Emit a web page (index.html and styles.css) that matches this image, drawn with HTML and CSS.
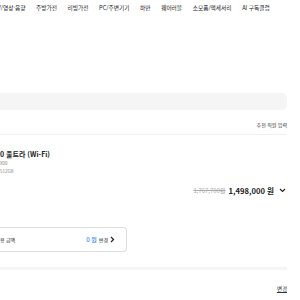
FILE: index.html
```html
<!DOCTYPE html>
<html lang="ko">
<head>
    <meta charset="UTF-8">
    <meta name="viewport" content="width=device-width, initial-scale=1.0">
    <title>주문서</title>
    <link rel="stylesheet" href="styles.css">
</head>
<body>
    <div class="page">
        <nav class="gnb">
            <a>TV/영상·음향</a>
            <a>주방가전</a>
            <a>리빙가전</a>
            <a>PC/주변기기</a>
            <a>하만</a>
            <a>웨어러블</a>
            <a>소모품/액세서리</a>
            <a>AI 구독클럽</a>
        </nav>

        <div class="search-bar"></div>

        <div class="section-head">
            <a class="link-small">추천 직원 입력</a>
        </div>

        <div class="product">
            <div class="product-info">
                <p class="product-name">0 울트라 (Wi-Fi)</p>
                <p class="product-meta">X00</p>
                <p class="product-meta">512GB</p>
            </div>
            <div class="price-row">
                <span class="price-old">1,767,700원</span>
                <span class="price-now">1,498,000 원</span>
                <svg class="chev" width="7" height="5" viewBox="0 0 7 5"><path d="M1 1l2.5 2.5L6 1" fill="none" stroke="#222" stroke-width="1.1"/></svg>
            </div>
        </div>

        <div class="point-box">
            <span class="point-label">용 금액</span>
            <span class="point-value"><b>0 원</b> 변경
                <svg width="5" height="7" viewBox="0 0 5 7"><path d="M1 1l2.5 2.5L1 6" fill="none" stroke="#222" stroke-width="1.2"/></svg>
            </span>
        </div>

        <div class="divider"></div>

        <div class="section-foot">
            <a class="link-under">변경</a>
        </div>
    </div>
</body>
</html>
```

FILE: styles.css
```css
body {
    margin: 0;
    font-family: 'Noto Sans CJK KR', 'Noto Sans', sans-serif;
    color: #222;
    background: #fff;
    overflow: hidden;
}
.page {
    width: 287px;
}
p {
    margin: 0;
}
.gnb {
    display: flex;
    gap: 10.6px;
    margin-left: -6px;
    padding-top: 4px;
    height: 11px;
    font-size: 5.7px;
    line-height: 8px;
    white-space: nowrap;
}
.gnb a {
    color: #222;
}
.search-bar {
    margin-top: 78px;
    height: 17px;
    background: #f5f5f5;
    border-radius: 0 5px 5px 0;
}
.section-head {
    display: flex;
    justify-content: flex-end;
    padding: 11px 0 5px;
    border-bottom: 1px solid #f0f0f0;
}
.link-small {
    font-size: 5px;
    line-height: 8px;
    color: #333;
}
.product {
    padding-top: 15px;
}
.product-name {
    font-size: 7px;
    font-weight: 700;
    line-height: 9px;
}
.product-meta {
    font-size: 4.5px;
    line-height: 8px;
    color: #888;
}
.price-row {
    display: flex;
    justify-content: flex-end;
    align-items: center;
    gap: 3px;
    margin-top: 10px;
}
.price-old {
    font-size: 6px;
    color: #aaa;
    text-decoration: line-through;
}
.price-now {
    font-size: 7.6px;
    font-weight: 700;
}
.chev {
    margin-left: 2px;
    margin-right: 1px;
}
.point-box {
    display: flex;
    justify-content: space-between;
    align-items: center;
    width: 115px;
    height: 23px;
    margin-top: 31px;
    margin-left: -2px;
    padding: 0 11px 0 2px;
    border: 1px solid #ddd;
    border-left: none;
    border-radius: 0 4px 4px 0;
    font-size: 5px;
}
.point-value {
    display: flex;
    align-items: center;
    gap: 2px;
    font-size: 5px;
}
.point-value b {
    color: #2189ff;
    font-size: 6px;
    font-weight: 500;
}
.divider {
    margin-top: 15px;
    height: 3px;
    background: #f5f5f5;
}
.section-foot {
    display: flex;
    justify-content: flex-end;
    padding-top: 15px;
}
.link-under {
    font-size: 5.5px;
    text-decoration: underline;
    color: #333;
}
```
